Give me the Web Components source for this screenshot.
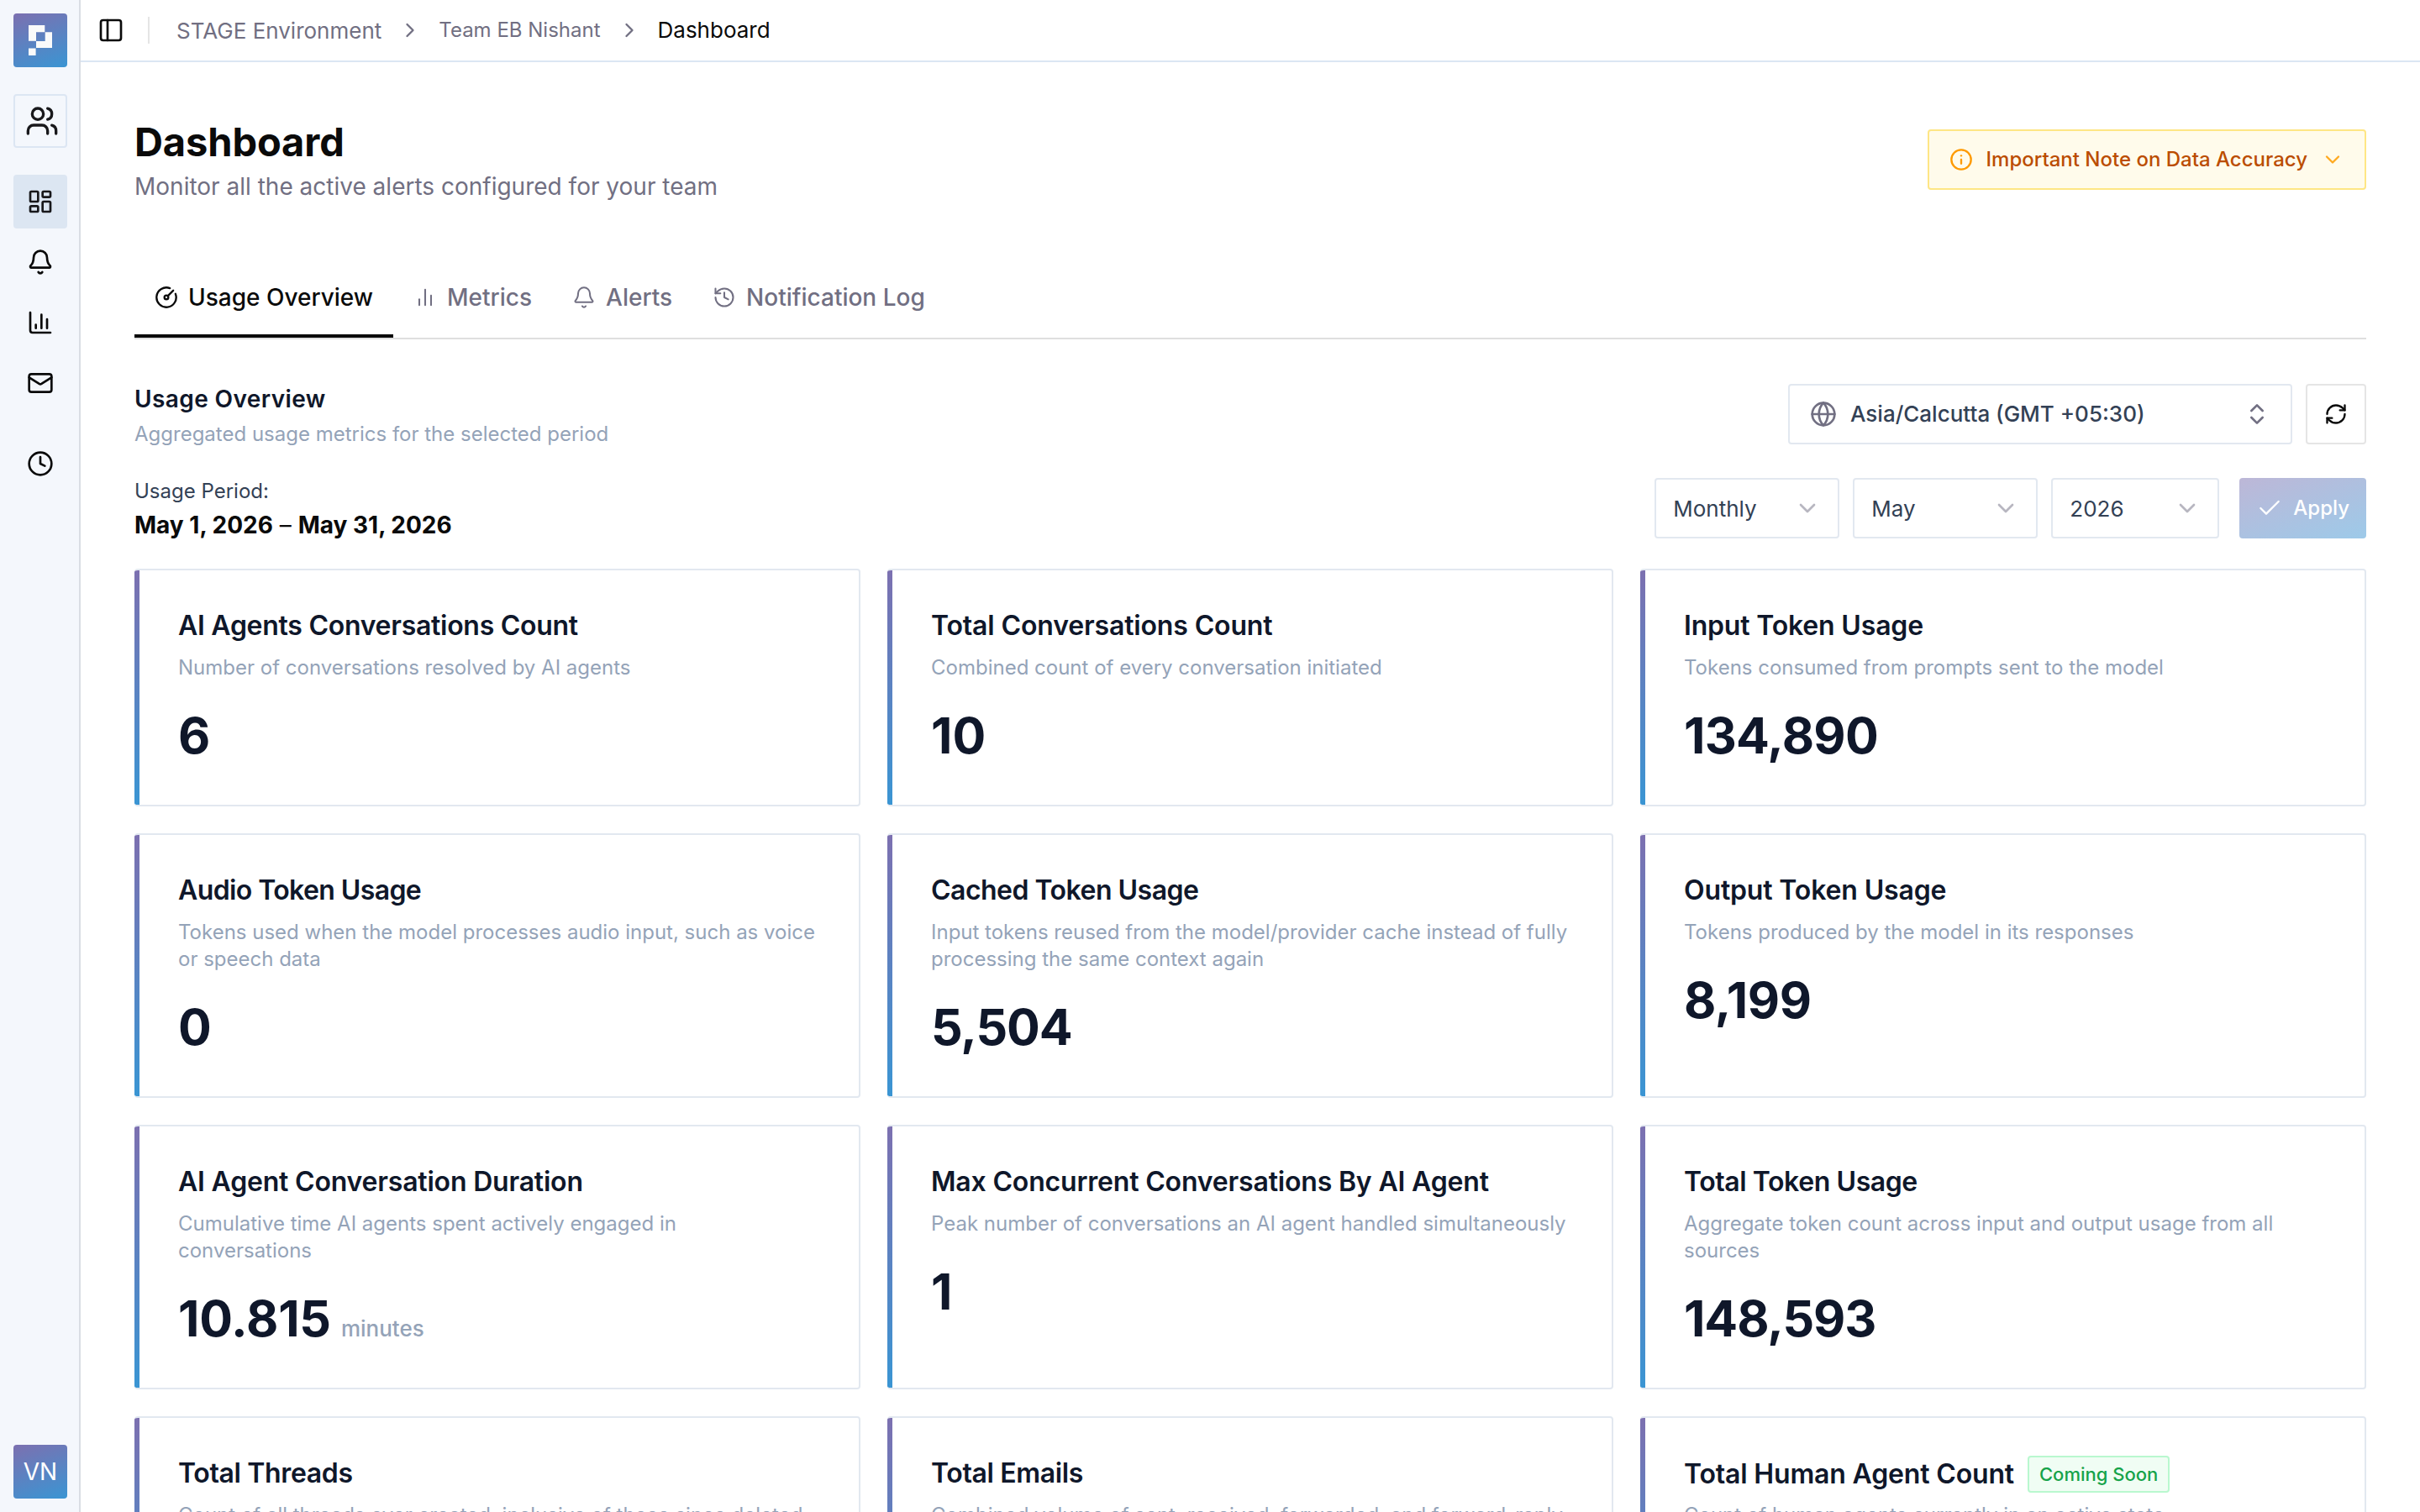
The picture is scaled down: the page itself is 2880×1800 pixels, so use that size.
<!DOCTYPE html>
<html lang="en">
<head>
<meta charset="utf-8">
<title>Dashboard</title>
<style>
  :root {
    --ink: #0a0a0a;
    --heading: #0f172a;
    --body: #334155;
    --muted: #716f82;
    --subtle: #94a3b8;
    --line: #e2e8f0;
    --brand: linear-gradient(160deg, #7c70b0, #3a95d3);
  }
  * { box-sizing: border-box; }
  html, body { height: 100%; }
  body {
    margin: 0;
    overflow: hidden;
    background: #fff;
    color: var(--ink);
    font-family: Inter, "Liberation Sans", sans-serif;
  }
  .filters { display: flex; gap: 16px; }
  .filters ui-button { margin-left: 8px; }
</style>
</head>
<body>

<app-shell>
  <side-bar slot="sidebar" initials="VN"></side-bar>
  <top-bar slot="header">
    <crumb-item root>STAGE Environment</crumb-item>
    <crumb-item small>Team EB Nishant</crumb-item>
    <crumb-item current>Dashboard</crumb-item>
  </top-bar>

  <page-heading>
    <span slot="title">Dashboard</span>
    <span slot="subtitle">Monitor all the active alerts configured for your team</span>
    <notice-banner slot="action">Important Note on Data Accuracy</notice-banner>
  </page-heading>

  <tab-list>
    <tab-item icon="gauge" weight="2" active>Usage Overview</tab-item>
    <tab-item icon="bars">Metrics</tab-item>
    <tab-item icon="bell">Alerts</tab-item>
    <tab-item icon="history">Notification Log</tab-item>
  </tab-list>

  <section-row kind="title">
    <span slot="first">Usage Overview</span>
    <span slot="second">Aggregated usage metrics for the selected period</span>
    <div slot="controls" class="filters">
      <select-box icon="globe" arrow="updown" style="width: 600px">Asia/Calcutta (GMT +05:30)</select-box>
      <refresh-button></refresh-button>
    </div>
  </section-row>

  <section-row kind="period">
    <span slot="first">Usage Period:</span>
    <span slot="second"><b>May 1, 2026</b> – <b>May 31, 2026</b></span>
    <div slot="controls" class="filters">
      <select-box style="width: 220px">Monthly</select-box>
      <select-box style="width: 220px">May</select-box>
      <select-box style="width: 200px">2026</select-box>
      <ui-button>Apply</ui-button>
    </div>
  </section-row>

  <metric-grid></metric-grid>
</app-shell>

<script>
const ICONS = {
  panel: '<rect x="3" y="3" width="18" height="18" rx="2"/><path d="M9 3v18"/>',
  users: '<path d="M16 21v-2a4 4 0 0 0-4-4H6a4 4 0 0 0-4 4v2"/><circle cx="9" cy="7" r="4"/><path d="M22 21v-2a4 4 0 0 0-3-3.87"/><path d="M16 3.13a4 4 0 0 1 0 7.75"/>',
  dashboard: '<rect x="3" y="3" width="7" height="9" rx="1"/><rect x="14" y="3" width="7" height="5" rx="1"/><rect x="14" y="12" width="7" height="9" rx="1"/><rect x="3" y="16" width="7" height="5" rx="1"/>',
  bell: '<path d="M10.268 21a2 2 0 0 0 3.464 0"/><path d="M3.262 15.326A1 1 0 0 0 4 17h16a1 1 0 0 0 .74-1.673C19.41 13.956 18 12.499 18 8A6 6 0 0 0 6 8c0 4.499-1.411 5.956-2.738 7.326"/>',
  chart: '<path d="M3 3v16a2 2 0 0 0 2 2h16"/><path d="M18 17V9"/><path d="M13 17V5"/><path d="M8 17v-3"/>',
  mail: '<rect x="2" y="4" width="20" height="16" rx="2"/><path d="m22 7-8.991 5.727a2 2 0 0 1-2.009 0L2 7"/>',
  clock: '<circle cx="12" cy="12" r="10"/><path d="M12 6v6l4 2"/>',
  right: '<path d="m9 18 6-6-6-6"/>',
  down: '<path d="m6 9 6 6 6-6"/>',
  updown: '<path d="m7 15 5 5 5-5"/><path d="m7 9 5-5 5 5"/>',
  info: '<circle cx="12" cy="12" r="10"/><path d="M12 16v-4"/><path d="M12 8h.01"/>',
  gauge: '<path d="M15.6 2.7a10 10 0 1 0 5.7 5.7"/><circle cx="12" cy="12" r="2"/><path d="M13.4 10.6 19 5"/>',
  bars: '<path d="M18 20V10"/><path d="M12 20V4"/><path d="M6 20v-6"/>',
  history: '<path d="M3 12a9 9 0 1 0 9-9 9.75 9.75 0 0 0-6.74 2.74L3 8"/><path d="M3 3v5h5"/><path d="M12 7v5l4 2"/>',
  globe: '<circle cx="12" cy="12" r="10"/><path d="M12 2a14.5 14.5 0 0 0 0 20 14.5 14.5 0 0 0 0-20"/><path d="M2 12h20"/>',
  refresh: '<path d="M3 12a9 9 0 0 1 9-9 9.75 9.75 0 0 1 6.74 2.74L21 8"/><path d="M21 3v5h-5"/><path d="M21 12a9 9 0 0 1-9 9 9.75 9.75 0 0 1-6.74-2.74L3 16"/><path d="M8 16H3v5"/>',
  check: '<path d="M20 6 9 17l-5-5"/>'
};

const METRICS = [
  { title: "AI Agents Conversations Count", text: "Number of conversations resolved by AI agents", value: "6", track: -0.28 },
  { title: "Total Conversations Count", text: "Combined count of every conversation initiated", value: "10", track: -0.15 },
  { title: "Input Token Usage", text: "Tokens consumed from prompts sent to the model", value: "134,890", track: -0.18, valueTrack: -0.7 },
  { title: "Audio Token Usage", text: "Tokens used when the model processes audio input, such as voice or speech data", value: "0", track: -0.6 },
  { title: "Cached Token Usage", text: "Input tokens reused from the model/provider cache instead of fully processing the same context again", value: "5,504", track: -0.52, valueTrack: -1.1 },
  { title: "Output Token Usage", text: "Tokens produced by the model in its responses", value: "8,199", track: -0.15, valueTrack: -0.4 },
  { title: "AI Agent Conversation Duration", text: "Cumulative time AI agents spent actively engaged in<br>conversations", value: "10.815", unit: "minutes", track: -0.2, valueTrack: -0.2 },
  { title: "Max Concurrent Conversations By AI Agent", text: "Peak number of conversations an AI agent handled simultaneously", value: "1", track: -0.18 },
  { title: "Total Token Usage", text: "Aggregate token count across input and output usage from all sources", value: "148,593", track: -0.42, valueTrack: -1.1 },
  { title: "Total Threads", text: "Count of all threads ever created, inclusive of those since deleted", track: -0.35 },
  { title: "Total Emails", text: "Combined volume of sent, received, forwarded, and forward-reply", track: -0.35 },
  { title: "Total Human Agent Count", text: "Count of human agents currently in an active state", badge: "Coming Soon", track: -0.17 }
];

class BaseElement extends HTMLElement {
  constructor() {
    super();
    this.attachShadow({ mode: "open" });
  }

  connectedCallback() {
    this.shadowRoot.innerHTML = `<style>* { box-sizing: border-box; } ${this.styles()}</style>${this.template()}`;
  }

  styles() {
    return "";
  }

  template() {
    return "<slot></slot>";
  }
}

class AppIcon extends BaseElement {
  styles() {
    const size = this.getAttribute("size") || 32;
    return `
      :host { display: block; flex: none; width: ${size}px; height: ${size}px; }
      svg { display: block; width: 100%; height: 100%; }
    `;
  }

  template() {
    const weight = this.getAttribute("weight") || 2;
    return `<svg viewBox="0 0 24 24" fill="none" stroke="currentColor" stroke-width="${weight}" stroke-linecap="round" stroke-linejoin="round" aria-hidden="true">${ICONS[this.getAttribute("name")]}</svg>`;
  }
}

class AppShell extends BaseElement {
  styles() {
    return `
      :host { display: flex; height: 100vh; overflow: hidden; }
      .main { flex: 1; min-width: 0; display: flex; flex-direction: column; }
      .content { padding: 64px 64px 0; }
    `;
  }

  template() {
    return `
      <slot name="sidebar"></slot>
      <div class="main">
        <slot name="header"></slot>
        <main class="content"><slot></slot></main>
      </div>
    `;
  }
}

class SideBar extends BaseElement {
  styles() {
    return `
      :host {
        display: flex; flex-direction: column; flex: none; width: 96px; height: 100%;
        padding: 16px 14px 16px 16px; background: #f4f7fc; border-right: 2px solid #d9dde4;
      }
      .tile { display: flex; align-items: center; justify-content: center; width: 64px; height: 64px; border-radius: 4px; }
      .brand { background: var(--brand); color: #fff; font-size: 28px; }
      .brand svg { width: 64px; height: 64px; }
      .team { margin: 32px 0; padding-left: 4px; border: 2px solid #dce6f3; color: #18181b; }
      .active { background: #dce6f2; color: #18181b; }
      nav { display: flex; flex-direction: column; gap: 8px; flex: 1; }
      .last { margin-top: 24px; }
    `;
  }

  template() {
    return `
      <div class="tile brand">
        <svg viewBox="0 0 64 64" aria-hidden="true">
          <path fill="#fafafa" d="M18 14h19.3v8.2H27v10.4h-9zM37.7 22.2H46V41H27v-8h10.7zM18 41.4h8.6V50H18z"/>
          <path fill="#fafafa" d="M18 32h9v.6h-9z"/>
        </svg>
      </div>
      <div class="tile team"><app-icon name="users" size="40"></app-icon></div>
      <nav>
        <div class="tile active"><app-icon name="dashboard"></app-icon></div>
        <div class="tile"><app-icon name="bell"></app-icon></div>
        <div class="tile"><app-icon name="chart"></app-icon></div>
        <div class="tile"><app-icon name="mail"></app-icon></div>
        <div class="tile last"><app-icon name="clock"></app-icon></div>
      </nav>
      <div class="tile brand">${this.getAttribute("initials")}</div>
    `;
  }
}

class TopBar extends BaseElement {
  styles() {
    return `
      :host { display: flex; align-items: center; flex: none; height: 74px; padding-left: 20px; border-bottom: 2px solid #dbe6f3; }
      .rule { width: 2px; height: 32px; margin: 0 32px 0 28px; background: #e5e5e5; }
      .crumbs { display: flex; align-items: center; gap: 20px; }
    `;
  }

  template() {
    return `
      <app-icon name="panel"></app-icon>
      <div class="rule"></div>
      <div class="crumbs"><slot></slot></div>
    `;
  }
}

class CrumbItem extends BaseElement {
  styles() {
    return `
      :host { display: flex; align-items: center; gap: 20px; height: 32px; color: var(--muted); font-size: 26px; line-height: 32px; white-space: nowrap; }
      :host([small]) { font-size: 24px; }
      :host([small]) span { padding-bottom: 1px; }
      :host([root]) span { padding-top: 2px; }
      :host([current]) { color: var(--ink); }
    `;
  }

  template() {
    const arrow = this.hasAttribute("current") ? "" : '<app-icon name="right" size="28"></app-icon>';
    return `<span><slot></slot></span>${arrow}`;
  }
}

class PageHeading extends BaseElement {
  styles() {
    return `
      :host { display: flex; align-items: center; justify-content: space-between; }
      h1 { margin: 0 0 2px; font-size: 47px; line-height: 62px; font-weight: 700; letter-spacing: -0.1px; }
      p { margin: 0; font-size: 28px; line-height: 40px; color: var(--muted); }
    `;
  }

  template() {
    return `
      <div>
        <h1><slot name="title"></slot></h1>
        <p><slot name="subtitle"></slot></p>
      </div>
      <slot name="action"></slot>
    `;
  }
}

class NoticeBanner extends BaseElement {
  styles() {
    return `
      :host {
        display: flex; align-items: center; gap: 16px; height: 72px; padding: 0 24px;
        border: 2px solid #fee685; border-radius: 4px; background: #fffbeb;
        color: #bb4d00; font-size: 24px; font-weight: 500;
      }
      span { padding-bottom: 2px; }
      .info { color: #fe9a00; }
      .arrow { color: #ffa91f; }
    `;
  }

  template() {
    return `
      <app-icon class="info" name="info" size="28"></app-icon>
      <span><slot></slot></span>
      <app-icon class="arrow" name="down" size="28"></app-icon>
    `;
  }
}

class TabList extends BaseElement {
  styles() {
    return ":host { display: flex; margin-top: 64px; border-bottom: 2px solid #dfdfdf; }";
  }
}

class TabItem extends BaseElement {
  styles() {
    return `
      :host {
        display: flex; align-items: center; gap: 12px; height: 96px; padding: 0 24px;
        color: var(--muted); font-size: 28px; line-height: 34px; font-weight: 500;
      }
      :host([active]) { color: var(--ink); box-shadow: inset 0 -4px 0 var(--ink); }
    `;
  }

  template() {
    const weight = this.getAttribute("weight") || 1.75;
    return `<app-icon name="${this.getAttribute("icon")}" size="28" weight="${weight}"></app-icon><span><slot></slot></span>`;
  }
}

class SectionRow extends BaseElement {
  styles() {
    return `
      :host { display: flex; align-items: flex-start; justify-content: space-between; }
      :host([kind="title"]) { margin-top: 53px; }
      :host([kind="period"]) { margin: 36px 0 34px; }
      .first, .second { white-space: nowrap; }
      :host([kind="title"]) .first { color: var(--heading); font-size: 28px; line-height: 36px; font-weight: 600; letter-spacing: 0.4px; }
      :host([kind="title"]) .second { margin-top: 8px; color: var(--subtle); font-size: 24px; line-height: 32px; }
      :host([kind="period"]) .first { color: var(--body); font-size: 24px; line-height: 32px; }
      :host([kind="period"]) .second { margin-top: 6px; font-size: 28px; line-height: 36px; }
    `;
  }

  template() {
    return `
      <div>
        <div class="first"><slot name="first"></slot></div>
        <div class="second"><slot name="second"></slot></div>
      </div>
      <slot name="controls"></slot>
    `;
  }
}

class SelectBox extends BaseElement {
  styles() {
    return `
      :host {
        display: flex; align-items: center; height: 72px; padding: 0 20px;
        border: 2px solid var(--line); border-radius: 4px; color: var(--body); font-size: 26px;
      }
      :host([icon]) { gap: 16px; padding: 0 24px; font-weight: 500; }
      :host([icon]) span { padding-bottom: 2px; }
      span { flex: 1; }
      app-icon { color: var(--muted); }
      .faded { opacity: 0.5; }
    `;
  }

  template() {
    const icon = this.getAttribute("icon");
    const arrow = this.getAttribute("arrow") || "down";
    return `
      ${icon ? `<app-icon name="${icon}"></app-icon>` : ""}
      <span><slot></slot></span>
      <app-icon name="${arrow}" class="${arrow === "down" ? "faded" : ""}"></app-icon>
    `;
  }
}

class RefreshButton extends BaseElement {
  styles() {
    return ":host { display: flex; align-items: center; justify-content: center; width: 72px; height: 72px; border: 2px solid #e5e5e5; border-radius: 4px; }";
  }

  template() {
    return '<app-icon name="refresh" size="28"></app-icon>';
  }
}

class UiButton extends BaseElement {
  styles() {
    return `
      :host {
        display: flex; align-items: center; gap: 12px; height: 72px; padding: 0 20px; border-radius: 4px;
        background: linear-gradient(160deg, #bdb7d7, #9dcae9); color: #fff; font-size: 24px; font-weight: 500;
      }
      span { padding-bottom: 2px; }
    `;
  }

  template() {
    return '<app-icon name="check" weight="1.75"></app-icon><span><slot></slot></span>';
  }
}

class MetricGrid extends BaseElement {
  styles() {
    return ":host { display: grid; grid-template-columns: repeat(3, 1fr); gap: 32px; }";
  }

  template() {
    return METRICS.map((m) => `
      <metric-card
        value="${m.value || ""}"
        unit="${m.unit || ""}"
        badge="${m.badge || ""}"
        style="--track: ${m.track}px; --value-track: ${m.valueTrack || 0}px"
      >
        <span slot="title">${m.title}</span>
        <span slot="text">${m.text}</span>
      </metric-card>
    `).join("");
  }
}

class MetricCard extends BaseElement {
  styles() {
    return `
      :host { display: flex; overflow: hidden; border: 2px solid var(--line); border-left: 0; border-radius: 4px; }
      .bar { flex: none; width: 6px; background: linear-gradient(#7c70b0, #3a95d3); }
      .body { flex: 1; min-width: 0; padding: 46px 50px 52px 46px; }
      .head { display: flex; align-items: center; gap: 16px; height: 40px; }
      .head.tagged { height: 44px; margin: -1px 0 -3px; }
      h3 { margin: 0; color: var(--heading); font-size: 32px; line-height: 40px; font-weight: 600; letter-spacing: var(--track); white-space: nowrap; }
      .badge {
        height: 44px; padding: 0 12px; border: 2px solid #b9f8cf; border-radius: 4px;
        background: #f0fdf4; color: #16a34a; font-size: 22px; line-height: 40px; font-weight: 500;
      }
      p { margin: 14px 0 0; color: var(--subtle); font-size: 24px; line-height: 32px; }
      .value { display: flex; align-items: baseline; gap: 12px; height: 60px; margin-top: 35px; color: var(--heading); font-size: 59px; line-height: 60px; font-weight: 700; letter-spacing: var(--value-track); }
      .unit { color: var(--subtle); font-size: 26px; font-weight: 500; letter-spacing: 0; }
    `;
  }

  template() {
    const badge = this.getAttribute("badge");
    const unit = this.getAttribute("unit");
    return `
      <div class="bar"></div>
      <div class="body">
        <div class="head ${badge ? "tagged" : ""}">
          <h3><slot name="title"></slot></h3>
          ${badge ? `<span class="badge">${badge}</span>` : ""}
        </div>
        <p><slot name="text"></slot></p>
        <div class="value"><span>${this.getAttribute("value")}</span>${unit ? `<span class="unit">${unit}</span>` : ""}</div>
      </div>
    `;
  }
}

customElements.define("app-icon", AppIcon);
customElements.define("app-shell", AppShell);
customElements.define("side-bar", SideBar);
customElements.define("top-bar", TopBar);
customElements.define("crumb-item", CrumbItem);
customElements.define("page-heading", PageHeading);
customElements.define("notice-banner", NoticeBanner);
customElements.define("tab-list", TabList);
customElements.define("tab-item", TabItem);
customElements.define("section-row", SectionRow);
customElements.define("select-box", SelectBox);
customElements.define("refresh-button", RefreshButton);
customElements.define("ui-button", UiButton);
customElements.define("metric-card", MetricCard);
customElements.define("metric-grid", MetricGrid);
</script>
</body>
</html>
